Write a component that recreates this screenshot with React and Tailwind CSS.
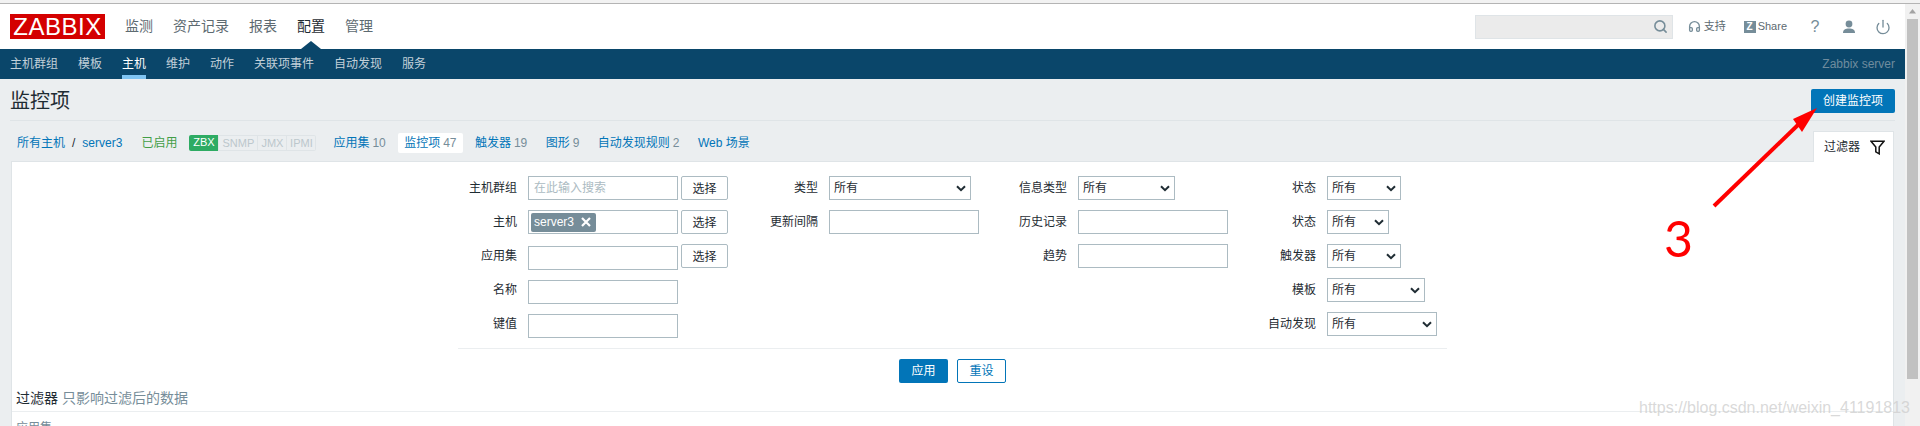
import { Search, Headphones, Power } from 'lucide-react';

const subNav = ['主机群组', '模板', '主机', '维护', '动作', '关联项事件', '自动发现', '服务'];
const topNav = ['监测', '资产记录', '报表', '配置', '管理'];

const tabs = [
  { label: '应用集', count: '10' },
  { label: '监控项', count: '47', active: true },
  { label: '触发器', count: '19' },
  { label: '图形', count: '9' },
  { label: '自动发现规则', count: '2' },
  { label: 'Web 场景' },
];

function Chevron() {
  return (
    <svg width="10" height="7" viewBox="0 0 10 7" className="shrink-0">
      <path d="M1 1.2 L5 5.2 L9 1.2" fill="none" stroke="#1f2c33" strokeWidth="2" />
    </svg>
  );
}

function FakeSelect({ width }) {
  return (
    <div className={`${width} h-6 border border-[#acbbc2] bg-white flex items-center justify-between pl-[4px] pr-[4px] text-[12px] text-[#1f2c33]`}>
      <span>所有</span>
      <Chevron />
    </div>
  );
}

function TextInput({ className = '', placeholder }) {
  return (
    <input
      placeholder={placeholder}
      className={`block w-[150px] h-6 border border-[#acbbc2] bg-white px-[5px] text-[12px] outline-none placeholder:text-[#acbbc2] ${className}`}
    />
  );
}

function PickButton() {
  return (
    <button className="w-[47px] h-6 ml-[3px] border border-[#acbbc2] rounded-[2px] bg-white text-[12px] text-[#1f2c33] pt-[1px]">
      选择
    </button>
  );
}

function Row({ label, labelWidth = 'grid-cols-[55px_1fr]', children }) {
  return (
    <div className={`grid ${labelWidth} gap-x-[11px] h-[34px] items-start`}>
      <div className="h-6 flex items-center justify-end text-[12px] text-[#1f2c33] whitespace-nowrap">{label}</div>
      <div className="flex items-start">{children}</div>
    </div>
  );
}

function FilterForm() {
  const col1 = 'grid-cols-[59px_1fr]';
  return (
    <div className="w-[989px] mx-auto pt-[14px]">
      <div className="grid grid-cols-[305px_249px_249px_186px]">
        <div>
          <Row label="主机群组" labelWidth={col1}>
            <TextInput placeholder="在此输入搜索" />
            <PickButton />
          </Row>
          <Row label="主机" labelWidth={col1}>
            <div className="w-[150px] h-6 border border-[#acbbc2] bg-white flex items-center pl-[2px]">
              <span className="h-[19px] w-[65px] rounded-[2px] bg-[#768d99] text-white text-[12px] flex items-center pl-[3px] gap-[7px]">
                server3
                <svg width="10" height="10" viewBox="0 0 10 10">
                  <path d="M1 1 L9 9 M9 1 L1 9" stroke="#fff" strokeWidth="2.2" />
                </svg>
              </span>
            </div>
            <PickButton />
          </Row>
          <Row label="应用集" labelWidth={col1}>
            <TextInput className="mt-[2px]" />
            <PickButton />
          </Row>
          <Row label="名称" labelWidth={col1}>
            <TextInput className="mt-[2px]" />
          </Row>
          <Row label="键值" labelWidth={col1}>
            <TextInput className="mt-[2px]" />
          </Row>
        </div>
        <div>
          <Row label="类型"><FakeSelect width="w-[142px]" /></Row>
          <Row label="更新间隔"><TextInput /></Row>
        </div>
        <div>
          <Row label="信息类型"><FakeSelect width="w-[97px]" /></Row>
          <Row label="历史记录"><TextInput /></Row>
          <Row label="趋势"><TextInput /></Row>
        </div>
        <div>
          <Row label="状态"><FakeSelect width="w-[74px]" /></Row>
          <Row label="状态"><FakeSelect width="w-[62px]" /></Row>
          <Row label="触发器"><FakeSelect width="w-[74px]" /></Row>
          <Row label="模板"><FakeSelect width="w-[98px]" /></Row>
          <Row label="自动发现"><FakeSelect width="w-[110px]" /></Row>
        </div>
      </div>
      <div className="mt-[2px] border-t border-[#ebeef0] pt-[10px] flex justify-center gap-[9px]">
        <button className="w-[49px] h-6 rounded-[2px] bg-[#0275b8] text-white text-[12px]">应用</button>
        <button className="w-[49px] h-6 rounded-[2px] border border-[#0275b8] bg-white text-[#0275b8] text-[12px]">重设</button>
      </div>
    </div>
  );
}

export default function App() {
  return (
    <div
      className="relative w-[1920px] h-[426px] overflow-hidden flex flex-col bg-[#ebeef0]"
      style={{ fontFamily: '"Liberation Sans", "Noto Sans CJK SC", sans-serif' }}
    >
      {/* Browser edge */}
      <div className="h-[4px] shrink-0 bg-[#f2f2f2] border-b border-[#b4b4b4]" />

      <div className="flex flex-1 min-h-0">
        <div className="w-[1905px] shrink-0 flex flex-col">
          {/* Top menu */}
          <header className="h-[45px] shrink-0 bg-white flex items-center pl-[10px] pr-[14px]">
            <div className="w-[95px] h-[25px] bg-[#d40000] text-white text-[24px] leading-[25px] text-center tracking-[0.5px]">
              ZABBIX
            </div>
            <nav className="flex gap-5 ml-5 h-full items-center">
              {topNav.map((item) => (
                <span
                  key={item}
                  className={`relative h-full flex items-center text-[14px] ${item === '配置' ? 'text-[#1f2c33]' : 'text-[#5d6a71]'}`}
                >
                  {item}
                  {item === '配置' && (
                    <svg width="20" height="8" viewBox="0 0 20 8" className="absolute bottom-0 left-[4px]">
                      <path d="M0 8 L10 0 L20 8 Z" fill="#0a466a" />
                    </svg>
                  )}
                </span>
              ))}
            </nav>
            <div className="ml-auto flex items-center text-[#768d99]">
              <div className="w-[198px] h-6 bg-[#ebebeb] border border-[#dfe4e7] flex items-center justify-end pr-[4px]">
                <Search size={15} strokeWidth={2.5} color="#768d99" />
              </div>
              <Headphones size={13} strokeWidth={2.5} className="ml-[15px]" />
              <span className="ml-[3px] text-[11px] text-[#5d6a71]">支持</span>
              <span className="ml-[18px] w-3 h-3 bg-[#768d99] text-white text-[10px] leading-3 font-bold text-center">Z</span>
              <span className="ml-[2px] text-[11px] text-[#5d6a71]">Share</span>
              <span className="ml-[23px] w-[10px] text-[16px] leading-none text-center">?</span>
              <svg width="14" height="14" viewBox="0 0 14 14" className="ml-[22px]" fill="#768d99">
                <circle cx="7" cy="4" r="3.4" />
                <path d="M1 13 C1 9.5 3.5 8.5 7 8.5 C10.5 8.5 13 9.5 13 13 Z" />
              </svg>
              <Power size={16} strokeWidth={2} className="ml-[19px]" />
            </div>
          </header>

          {/* Sub menu */}
          <nav className="h-[30px] shrink-0 bg-[#0a466a] flex items-center pl-[10px] pr-[10px] gap-5 text-[12px]">
            {subNav.map((item) => (
              <span
                key={item}
                className={`h-full flex items-center ${item === '主机' ? 'text-white border-b-4 border-[#7fc4f2] pt-1' : 'text-[#c2d0d9]'}`}
              >
                {item}
              </span>
            ))}
            <span className="ml-auto text-[#6f8c9e]">Zabbix server</span>
          </nav>

          {/* Title */}
          <div className="h-[42px] shrink-0 mx-[10px] border-b border-[#dfe4e7] flex items-center justify-between pt-[3px]">
            <h1 className="text-[20px] text-[#1f2c33]">监控项</h1>
            <button className="w-[84px] h-6 rounded-[2px] bg-[#0275b8] text-white text-[12px]">创建监控项</button>
          </div>

          {/* Host tabs */}
          <div className="h-[40px] shrink-0 flex ml-[11px] mr-[11px] text-[12px]">
            <div className="flex items-center h-[32px] mt-[6px] self-start">
              <span className="ml-[6px] text-[#0275b8]">所有主机</span>
              <span className="ml-[7px] text-[#1f2c33]">/</span>
              <span className="ml-[7px] text-[#0275b8]">server3</span>
              <span className="ml-[19px] text-[#429e47]">已启用</span>
              <div className="ml-[12px] flex h-[16px] text-[11px] leading-[15px] text-center">
                <span className="w-[29px] bg-[#2eab63] text-white rounded-l-[2px]">ZBX</span>
                <span className="w-[40px] text-[#bcc7cc] border border-[#dfe4e7] bg-[#ebeef0]">SNMP</span>
                <span className="w-[29px] text-[#bcc7cc] border-y border-r border-[#dfe4e7]">JMX</span>
                <span className="w-[29px] text-[#bcc7cc] border-y border-r border-[#dfe4e7] rounded-r-[2px]">IPMI</span>
              </div>
              <div className="ml-[11px] flex items-center gap-[6.4px]">
                {tabs.map((tab) => (
                  <span
                    key={tab.label}
                    className={`h-[20px] px-[6px] flex items-center gap-[3px] rounded-[2px] ${tab.active ? 'bg-white' : ''}`}
                  >
                    <span className="text-[#0275b8]">{tab.label}</span>
                    {tab.count && <span className="text-[#768d99]">{tab.count}</span>}
                  </span>
                ))}
              </div>
            </div>
            <div className="ml-auto mt-[10px] w-[81px] h-[31px] bg-white border-x border-t border-[#dfe4e7] flex items-center pl-[10px] gap-[10px] text-[#1f2c33] relative z-10 -mb-[1px]">
              过滤器
              <svg width="15" height="15" viewBox="0 0 15 15">
                <path d="M1 1.2 H14 L9.2 7 V13.8 L5.8 11.8 V7 Z" fill="none" stroke="#111" strokeWidth="1.5" />
              </svg>
            </div>
          </div>

          {/* Main panel */}
          <main className="flex-1 mx-[11px] bg-white border-x border-t border-[#dfe4e7]">
            <FilterForm />
            <div className="mt-[5px] h-[24px] border-b border-[#ebeef0] pl-[4px] text-[14px] leading-[20px]">
              <span className="text-[#1f2c33]">过滤器</span>
              <span className="ml-[4px] text-[#768d99]">只影响过滤后的数据</span>
            </div>
            <div className="pl-[4px] pt-[7px] text-[12px] text-[#768d99]">应用集</div>
          </main>
        </div>

        {/* Scrollbar */}
        <div className="w-[15px] shrink-0 bg-[#f1f1f1] pl-[2px]">
          <svg width="11" height="15" viewBox="0 0 11 15" className="block">
            <path d="M5.5 5 L9 9.5 H2 Z" fill="#a3a3a3" />
          </svg>
          <div className="w-[11px] h-[360px] bg-[#c1c1c1]" />
        </div>
      </div>

      {/* Annotation drawn over the screenshot */}
      <svg width="1920" height="426" className="absolute inset-0 pointer-events-none">
        <path d="M1714 206 L1800 123" stroke="#ff0000" strokeWidth="4" />
        <path d="M1817 108 L1793 119 L1802 132 Z" fill="#ff0000" />
      </svg>
      <span className="absolute left-[1664px] top-[208px] text-[50px] leading-[60px] text-[#ff0000]" style={{ fontFamily: 'Lato, sans-serif' }}>3</span>
      <span className="absolute left-[1639px] top-[398px] text-[16px] leading-[20px] text-[#cfcfcf]/80 whitespace-nowrap">
        https://blog.csdn.net/weixin_41191813
      </span>
    </div>
  );
}
